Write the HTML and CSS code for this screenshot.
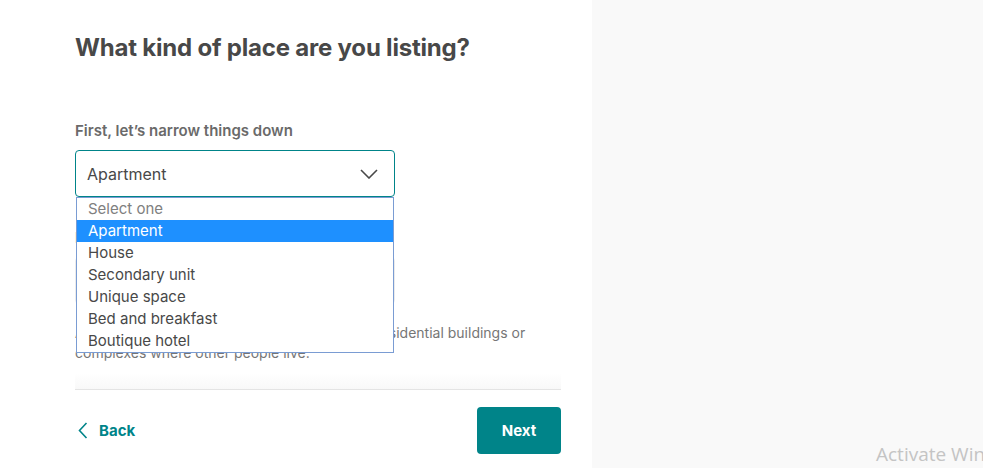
FILE: index.html
```html
<!DOCTYPE html>
<html lang="en">
<head>
<meta charset="utf-8">
<title>What kind of place are you listing?</title>
<link rel="stylesheet" href="styles.css">
</head>
<body>
<div class="page">
  <div class="main">
    <h1 class="title">What kind of place are you listing?</h1>
    <div class="form">
      <div class="field">
        <label class="label">First, let’s narrow things down</label>
        <div class="select-wrap">
          <div class="select">
            <span class="select-value">Apartment</span>
            <svg class="chev" width="18" height="10" viewBox="0 0 18 10"><polyline points="1,1 9,9 17,1" fill="none" stroke="#484848" stroke-width="1.6"/></svg>
          </div>
          <ul class="dropdown">
            <li class="opt placeholder">Select one</li>
            <li class="opt active">Apartment</li>
            <li class="opt">House</li>
            <li class="opt">Secondary unit</li>
            <li class="opt">Unique space</li>
            <li class="opt">Bed and breakfast</li>
            <li class="opt">Boutique hotel</li>
          </ul>
        </div>
      </div>
      <div class="field">
        <label class="label">Now choose a property type</label>
        <div class="select muted">
          <span class="select-value">Apartment</span>
        </div>
      </div>
      <p class="desc">Apartments are typically located in multi-unit residential buildings or complexes where other people live.</p>
    </div>
    <div class="footer">
      <div class="shade"></div>
      <div class="footer-row">
        <a class="back" href="#">
          <svg width="10" height="17" viewBox="0 0 10 17"><polyline points="8.5,1 1.5,8.5 8.5,16" fill="none" stroke="#008489" stroke-width="1.6"/></svg>
          <span>Back</span>
        </a>
        <button class="next">Next</button>
      </div>
    </div>
  </div>
  <div class="side">
    <span class="watermark">Activate Windows</span>
  </div>
</div>
</body>
</html>
```
FILE: styles.css
```css
html, body {
  margin: 0;
  padding: 0;
  background: #ffffff;
}
body {
  font-family: Inter, "Open Sans", "Liberation Sans", sans-serif;
  color: #484848;
  overflow: hidden;
}
.page {
  display: flex;
  width: 983px;
  height: 468px;
}
.main {
  width: 592px;
  box-sizing: border-box;
  padding: 0 31px 0 75px;
  display: flex;
  flex-direction: column;
}
.title {
  margin: 32px 0 0;
  font-size: 24px;
  line-height: 32px;
  font-weight: 700;
  color: #484848;
  letter-spacing: -0.2px;
}
.form {
  margin-top: 57px;
  display: flex;
  flex-direction: column;
}
.field {
  display: flex;
  flex-direction: column;
  gap: 9px;
  margin-bottom: 31px;
}
.label {
  font-size: 15px;
  line-height: 20px;
  font-weight: 600;
  color: #6a6a6a;
}
.select-wrap {
  position: relative;
  width: 320px;
}
.select {
  width: 320px;
  height: 47px;
  box-sizing: border-box;
  border: 1px solid #008489;
  border-radius: 4px;
  display: flex;
  align-items: center;
  justify-content: space-between;
  padding: 0 16px 0 11px;
  background: #fff;
}
.select.muted {
  border-color: #ebebeb;
}
.select-value {
  font-size: 16px;
  color: #484848;
}
.chev {
  display: block;
}
.dropdown {
  position: absolute;
  left: 1px;
  top: 47px;
  width: 318px;
  box-sizing: border-box;
  margin: 0;
  padding: 0;
  list-style: none;
  border: 1px solid #7a9cd3;
  background: #fff;
  z-index: 5;
}
.opt {
  height: 22px;
  line-height: 22px;
  font-size: 15px;
  padding-left: 11px;
  color: #484848;
}
.opt.placeholder {
  color: #808080;
}
.opt.active {
  background: #1e90ff;
  color: #ffffff;
}
.desc {
  margin: -12px 0 0;
  font-size: 14px;
  line-height: 20px;
  color: #767676;
  max-width: 470px;
}
.footer {
  margin-top: auto;
  margin-bottom: 14px;
  position: relative;
}
.shade {
  height: 16px;
  background: linear-gradient(to bottom, rgba(250,250,250,0), rgba(244,244,244,0.6));
  border-bottom: 1px solid #e4e4e4;
}
.footer-row {
  display: flex;
  justify-content: space-between;
  align-items: center;
  margin-top: 17px;
}
.back {
  display: flex;
  align-items: center;
  gap: 11px;
  padding-left: 3px;
  color: #008489;
  text-decoration: none;
  font-size: 15px;
  font-weight: 700;
}
.back svg {
  display: block;
}
.next {
  width: 84px;
  height: 47px;
  border: none;
  border-radius: 4px;
  background: #008489;
  color: #ffffff;
  font-family: inherit;
  font-size: 15px;
  font-weight: 700;
}
.side {
  flex: 1;
  background: #f9f9f9;
  position: relative;
  overflow: hidden;
}
.watermark {
  position: absolute;
  left: 284px;
  top: 441px;
  white-space: nowrap;
  font-family: "Open Sans", "Liberation Sans", sans-serif;
  font-size: 19px;
  color: #c4c4c4;
}
```
